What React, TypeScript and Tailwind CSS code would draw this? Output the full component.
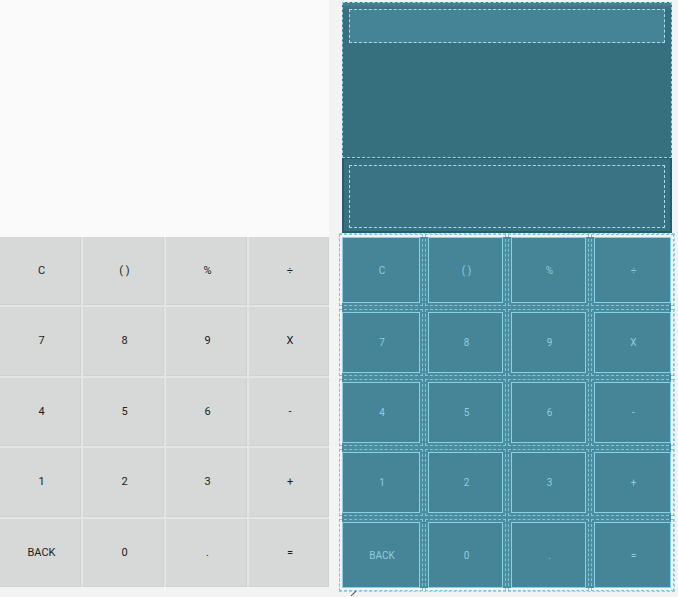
import React from 'react';

const KEYS = ['C', '( )', '%', '÷', '7', '8', '9', 'X', '4', '5', '6', '-', '1', '2', '3', '+', 'BACK', '0', '.', '='];

const FONT = { fontFamily: 'Roboto, "Noto Sans", sans-serif' };

function DesignView() {
  return (
    <div className="flex h-[587px] w-[329px] flex-col">
      {/* display area */}
      <div className="h-[237px] bg-[#fafafa]" />
      {/* keypad */}
      <div className="grid h-[350px] grid-cols-[81px_81px_81px_80px] grid-rows-5 gap-[2px] bg-[#e4e4e4]">
        {KEYS.map((k) => (
          <div
            key={k}
            className="flex items-center justify-center bg-[#d7d8d8] pl-[2px] text-[11px] text-[#1c1c1c] shadow-[inset_-1px_-1px_0_#cfd0d0]"
          >
            {k}
          </div>
        ))}
      </div>
    </div>
  );
}

function BlueprintView() {
  return (
    <div className="flex w-[330px] flex-col pt-[2px]">
      {/* result text area */}
      <div className="h-[156px] border border-dashed border-[#8fd6ea] bg-[#36707f] bg-gradient-to-b from-[#4a8494] via-[#36707f] to-[#36707f] bg-[length:100%_14px] bg-no-repeat p-[6px]">
        <div className="h-[34px] border border-dashed border-[#9fe0f0] bg-[#458396]" />
      </div>
      {/* input text area */}
      <div className="h-[75px] border-[2px] border-t border-[#245d6c] bg-[#37707f] px-[5px] pt-[6px]">
        <div className="h-[63px] border border-dashed border-[#9fe0f0] bg-[#3a7383]" />
      </div>
      {/* keypad */}
      <div className="-ml-[3px] w-[336px] border border-dashed border-[#8fd6ea] pb-[3px] pl-[2px] pr-[3px] pt-[3px]">
        <div className="grid grid-cols-[78px_75px_75px_77px] grid-rows-[66px_61px_61px_61px_66px] gap-x-[8px] gap-y-[9px] bg-[#4d8c9f]">
          {KEYS.map((k) => (
            <div
              key={k}
              className="flex items-center justify-center border border-[#86d2e8] bg-[#468497] pl-[2px] text-[10px] text-[#8ecde0] outline outline-1 outline-offset-2 outline-dashed outline-[#7cc6dc]"
            >
              {k}
            </div>
          ))}
        </div>
      </div>
      <div className="relative">
        <span className="absolute left-[8px] top-[1px] block h-[1px] w-[7px] -rotate-45 bg-[#555]" />
      </div>
    </div>
  );
}

export default function App() {
  return (
    <div className="flex h-[597px] w-[678px] gap-[13px] overflow-hidden bg-[#f3f3f3]" style={FONT}>
      <DesignView />
      <BlueprintView />
    </div>
  );
}
